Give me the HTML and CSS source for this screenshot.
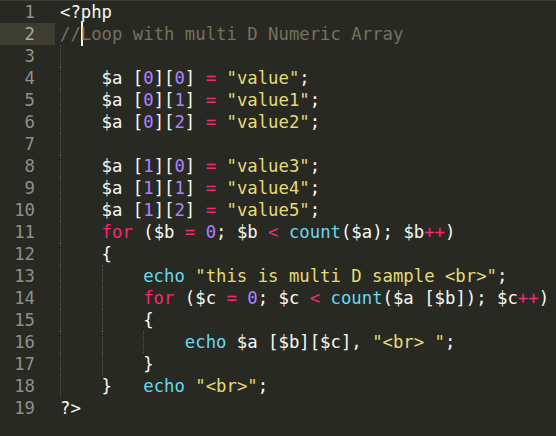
FILE: index.html
```html
<!DOCTYPE html>
<html>
<head>
<meta charset="utf-8">
<link rel="stylesheet" href="styles.css">
</head>
<body>
<div class="editor">
  <div class="gutter">
    <div class="ln">1</div>
    <div class="ln cur">2</div>
    <div class="ln">3</div>
    <div class="ln">4</div>
    <div class="ln">5</div>
    <div class="ln">6</div>
    <div class="ln">7</div>
    <div class="ln">8</div>
    <div class="ln">9</div>
    <div class="ln">10</div>
    <div class="ln">11</div>
    <div class="ln">12</div>
    <div class="ln">13</div>
    <div class="ln">14</div>
    <div class="ln">15</div>
    <div class="ln">16</div>
    <div class="ln">17</div>
    <div class="ln">18</div>
    <div class="ln">19</div>
  </div>
  <div class="code">
    <div class="line">&lt;?php</div>
    <div class="line"><span class="c">//</span><span class="caret"></span><span class="c">Loop with multi D Numeric Array</span></div>
    <div class="line"><span class="ind g"></span></div>
    <div class="line"><span class="ind g"></span>$a [<span class="n">0</span>][<span class="n">0</span>] <span class="k">=</span> <span class="s">"value"</span>;</div>
    <div class="line"><span class="ind g"></span>$a [<span class="n">0</span>][<span class="n">1</span>] <span class="k">=</span> <span class="s">"value1"</span>;</div>
    <div class="line"><span class="ind g"></span>$a [<span class="n">0</span>][<span class="n">2</span>] <span class="k">=</span> <span class="s">"value2"</span>;</div>
    <div class="line"><span class="ind g"></span></div>
    <div class="line"><span class="ind g"></span>$a [<span class="n">1</span>][<span class="n">0</span>] <span class="k">=</span> <span class="s">"value3"</span>;</div>
    <div class="line"><span class="ind g"></span>$a [<span class="n">1</span>][<span class="n">1</span>] <span class="k">=</span> <span class="s">"value4"</span>;</div>
    <div class="line"><span class="ind g"></span>$a [<span class="n">1</span>][<span class="n">2</span>] <span class="k">=</span> <span class="s">"value5"</span>;</div>
    <div class="line"><span class="ind g"></span><span class="k">for</span> ($b <span class="k">=</span> <span class="n">0</span>; $b <span class="k">&lt;</span> <span class="f">count</span>($a); $b<span class="k">++</span>)</div>
    <div class="line"><span class="ind g"></span>{</div>
    <div class="line"><span class="ind g"></span><span class="ind g"></span><span class="f">echo</span> <span class="s">"this is multi D sample &lt;br&gt;"</span>;</div>
    <div class="line"><span class="ind g"></span><span class="ind g"></span><span class="k">for</span> ($c <span class="k">=</span> <span class="n">0</span>; $c <span class="k">&lt;</span> <span class="f">count</span>($a [$b]); $c<span class="k">++</span>)</div>
    <div class="line"><span class="ind g"></span><span class="ind g"></span>{</div>
    <div class="line"><span class="ind g"></span><span class="ind g"></span><span class="ind g"></span><span class="f">echo</span> $a [$b][$c], <span class="s">"&lt;br&gt; "</span>;</div>
    <div class="line"><span class="ind g"></span><span class="ind g"></span>}</div>
    <div class="line"><span class="ind g"></span>}   <span class="f">echo</span> <span class="s">"&lt;br&gt;"</span>;</div>
    <div class="line">?&gt;</div>
  </div>
</div>
</body>
</html>
```

FILE: styles.css
```css
html, body {
  margin: 0;
  padding: 0;
  background: #282923;
}
body {
  width: 556px;
  height: 436px;
  overflow: hidden;
  border-top: 1px solid #3b3c36;
  box-sizing: border-box;
}
.editor {
  display: flex;
  font-family: "DejaVu Sans Mono", "Liberation Mono", monospace;
  font-size: 17.3px;
  line-height: 22px;
  color: #f8f8f2;
}
.gutter {
  width: 55px;
  flex: none;
}
.ln {
  height: 22px;
  text-align: right;
  padding-right: 20px;
  color: #8f908a;
}
.ln.cur {
  background: #3e3d32;
  color: #a8a99f;
}
.code {
  padding-left: 5px;
}
.line {
  height: 22px;
  white-space: pre;
}
.ind {
  display: inline-block;
  width: 4ch;
  height: 22px;
  vertical-align: top;
  box-sizing: border-box;
}
.g {
  border-left: 1px dotted #55564f;
}
.caret {
  display: inline-block;
  width: 0;
  height: 25px;
  margin-top: -2px;
  vertical-align: top;
  border-left: 2px solid #f8f8f0;
  margin-right: -2px;
}
.c { color: #75715e; }
.s { color: #e6db74; }
.n { color: #ae81ff; }
.k { color: #f92672; }
.f { color: #66d9ef; }
```
